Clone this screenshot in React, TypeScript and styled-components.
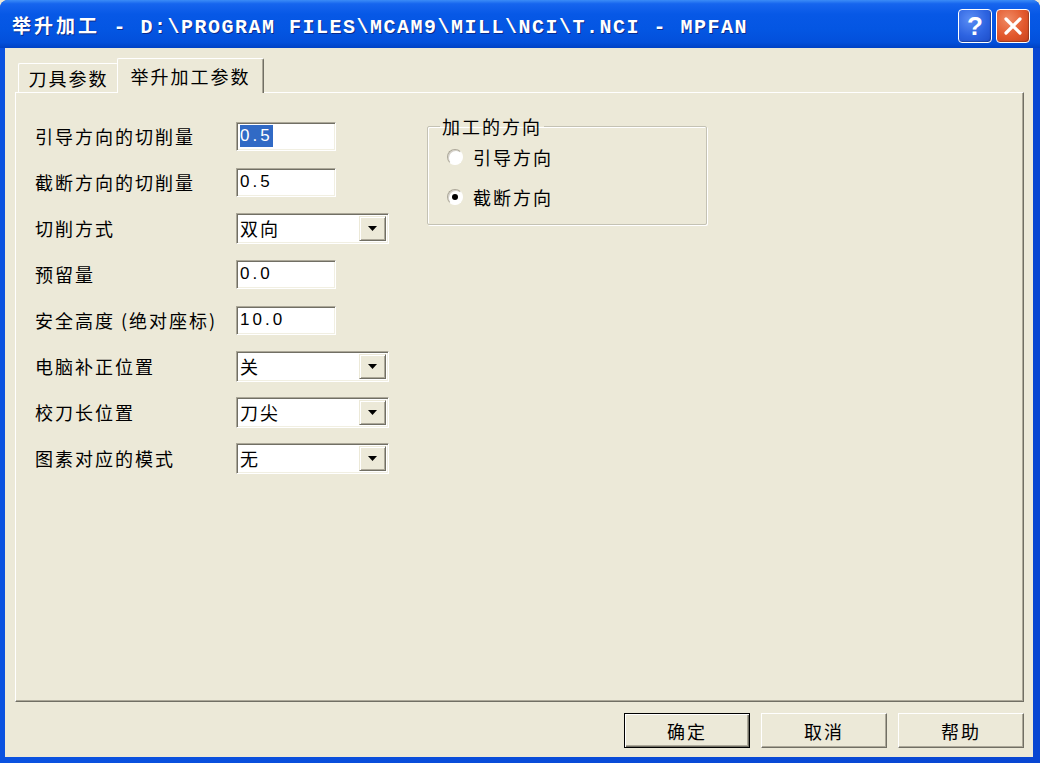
import React, { FC } from 'react';
import styled, { createGlobalStyle } from 'styled-components';

const GlobalStyle = createGlobalStyle`
  html, body {
    margin: 0;
    padding: 0;
    width: 1040px;
    height: 763px;
    overflow: hidden;
    background: #ece9d8;
  }
  body {
    font-family: "Noto Sans CJK SC", "Liberation Sans", sans-serif;
  }
`;

const Window = styled.div`
  width: 1040px;
  height: 763px;
  display: flex;
  flex-direction: column;
  background: #0a4bd8;
  border-radius: 8px 8px 0 0;
  overflow: hidden;
`;

const TitleBar = styled.div`
  height: 48px;
  flex: none;
  display: flex;
  align-items: center;
  padding: 0 10px 0 12px;
  box-sizing: border-box;
  background: linear-gradient(
    to bottom,
    #3b8cf7 0%,
    #1665ee 8%,
    #0758e6 30%,
    #0456e3 60%,
    #0350db 88%,
    #0042c4 100%
  );
`;

const TitleText = styled.div`
  flex: 1;
  color: #fff;
  font-weight: bold;
  white-space: nowrap;
  padding-top: 2px;
  text-shadow: 1px 1px 0 #0a2a8a;
`;

const TitleCjk = styled.span`
  font-family: "Noto Sans CJK SC", sans-serif;
  font-size: 19px;
  letter-spacing: 3px;
`;

const TitlePath = styled.span`
  font-family: "Liberation Mono", monospace;
  font-size: 20px;
  letter-spacing: 1.5px;
`;

const CaptionButtons = styled.div`
  display: flex;
  gap: 4px;
  margin-top: 4px;
`;

const CaptionButton = styled.div<{ $variant: 'help' | 'close' }>`
  width: 34px;
  height: 34px;
  box-sizing: border-box;
  border: 1px solid #fff;
  border-radius: 4px;
  display: flex;
  align-items: center;
  justify-content: center;
  color: #fff;
  font-family: "Liberation Sans", sans-serif;
  font-weight: bold;
  font-size: 26px;
  background: ${(p) =>
    p.$variant === 'help'
      ? 'radial-gradient(circle at 35% 30%, #5b8ef5 0%, #2d63e0 55%, #1c4cc8 100%)'
      : 'radial-gradient(circle at 35% 30%, #f08a64 0%, #e2582c 55%, #c6421c 100%)'};
  box-shadow: inset -1px -1px 1px rgba(0, 0, 0, 0.25);
`;

const FrameBody = styled.div`
  flex: 1;
  display: flex;
  padding: 0 7px 6px 5px;
  background: linear-gradient(to right, #0a52e0, #0846d2);
`;

const Client = styled.div`
  flex: 1;
  display: flex;
  flex-direction: column;
  background: #ece9d8;
  padding: 10px 9px 9px 10px;
`;

const TabStrip = styled.div`
  height: 34px;
  display: flex;
  align-items: flex-end;
  padding-left: 3px;
  position: relative;
  z-index: 1;
`;

const Tab = styled.div<{ $active?: boolean }>`
  box-sizing: border-box;
  display: flex;
  align-items: center;
  justify-content: center;
  font-size: 18px;
  letter-spacing: 2px;
  color: #000;
  background: #ece9d8;
  border-top: 1px solid #fff;
  border-left: 1px solid #fff;
  border-radius: 2px 2px 0 0;
  width: ${(p) => (p.$active ? '147px' : '100px')};
  height: ${(p) => (p.$active ? '35px' : '29px')};
  margin-bottom: ${(p) => (p.$active ? '-1px' : '0')};
  margin-left: ${(p) => (p.$active ? '-1px' : '0')};
  border-right: ${(p) => (p.$active ? '1px solid #716f64' : 'none')};
  box-shadow: ${(p) => (p.$active ? 'inset -1px 0 0 #aca899' : 'none')};
  padding-bottom: ${(p) => (p.$active ? '1px' : '0')};
`;

const Panel = styled.div`
  flex: 1;
  display: flex;
  align-items: flex-start;
  padding: 20px 0 0 19px;
  border-top: 1px solid #fff;
  border-left: 1px solid #fff;
  border-right: 1px solid #716f64;
  border-bottom: 1px solid #716f64;
  box-shadow: inset -1px -1px 0 #aca899;
`;

const FormGrid = styled.div`
  display: grid;
  grid-template-columns: 201px 154px;
  grid-auto-rows: 46px;
  align-items: center;
`;

const Label = styled.div`
  font-size: 18px;
  letter-spacing: 2px;
  color: #000;
  white-space: nowrap;
`;

const Sunken = styled.div`
  box-sizing: border-box;
  background: #fff;
  border-top: 1px solid #aca899;
  border-left: 1px solid #aca899;
  border-right: 1px solid #fff;
  border-bottom: 1px solid #fff;
  box-shadow: inset 1px 1px 0 #716f64, inset -1px -1px 0 #f1efe2;
  display: flex;
  align-items: center;
`;

const TextBox = styled(Sunken)`
  width: 100px;
  height: 29px;
  padding-left: 3px;
  font-family: "Liberation Sans", sans-serif;
  font-size: 17px;
  letter-spacing: 3px;
  color: #000;
`;

const Selected = styled.span`
  background: #316ac5;
  color: #fff;
  line-height: 22px;
`;

const Combo = styled(Sunken)`
  width: 153px;
  height: 31px;
  padding: 2px;
  align-items: stretch;
`;

const ComboText = styled.div`
  flex: 1;
  display: flex;
  align-items: center;
  padding-left: 1px;
  font-size: 18px;
  letter-spacing: 2px;
  color: #000;
`;

const ComboArrow = styled.div`
  width: 27px;
  box-sizing: border-box;
  display: flex;
  align-items: center;
  justify-content: center;
  background: #ece9d8;
  border-top: 1px solid #ece9d8;
  border-left: 1px solid #ece9d8;
  border-right: 1px solid #716f64;
  border-bottom: 1px solid #716f64;
  box-shadow: inset 1px 1px 0 #fff, inset -1px -1px 0 #aca899;
`;

const GroupBox = styled.fieldset`
  box-sizing: border-box;
  width: 280px;
  margin: 2px 0 0 37px;
  padding: 0 0 7px 0;
  border: 1px solid #c4c2b4;
  box-shadow: inset 1px 1px 0 #fff, 1px 1px 0 #fff;
  border-radius: 2px;
`;

const Legend = styled.legend`
  margin-left: 12px;
  padding: 0 2px;
  font-size: 18px;
  line-height: 22px;
  letter-spacing: 2px;
  color: #000;
`;

const RadioRow = styled.div`
  height: 40px;
  display: flex;
  align-items: center;
  gap: 10px;
  padding-left: 19px;
  font-size: 18px;
  letter-spacing: 2px;
  color: #000;
`;

const RadioDot = styled.span<{ $checked?: boolean }>`
  position: relative;
  width: 16px;
  height: 16px;
  box-sizing: border-box;
  border-radius: 50%;
  background: #fff;
  border: 1px solid;
  border-color: #aca899 #fff #fff #aca899;
  box-shadow: inset 1px 1px 0 #d4d0c8;

  &::after {
    content: '';
    display: ${(p) => (p.$checked ? 'block' : 'none')};
    position: absolute;
    left: 4px;
    top: 4px;
    width: 6px;
    height: 6px;
    border-radius: 50%;
    background: #000;
  }
`;

const ButtonRow = styled.div`
  display: flex;
  justify-content: flex-end;
  gap: 11px;
  margin-top: 11px;
`;

const PushButton = styled.div<{ $default?: boolean }>`
  width: 126px;
  height: 35px;
  box-sizing: border-box;
  display: flex;
  align-items: center;
  justify-content: center;
  font-size: 18px;
  letter-spacing: 2px;
  color: #000;
  background: #ece9d8;
  border: 1px solid;
  border-color: ${(p) => (p.$default ? '#000' : '#fff #716f64 #716f64 #fff')};
  box-shadow: ${(p) =>
    p.$default
      ? 'inset 1px 1px 0 #fff, inset -1px -1px 0 #716f64, inset -2px -2px 0 #aca899'
      : 'inset -1px -1px 0 #aca899'};
`;

const ArrowIcon: FC = () => (
  <svg width="9" height="5" viewBox="0 0 9 5">
    <polygon points="0,0 9,0 4.5,5" fill="#000" />
  </svg>
);

type Row =
  | { label: string; kind: 'text'; value: string; selected?: boolean }
  | { label: string; kind: 'combo'; value: string };

const rows: Row[] = [
  { label: '引导方向的切削量', kind: 'text', value: '0.5', selected: true },
  { label: '截断方向的切削量', kind: 'text', value: '0.5' },
  { label: '切削方式', kind: 'combo', value: '双向' },
  { label: '预留量', kind: 'text', value: '0.0' },
  { label: '安全高度 (绝对座标)', kind: 'text', value: '10.0' },
  { label: '电脑补正位置', kind: 'combo', value: '关' },
  { label: '校刀长位置', kind: 'combo', value: '刀尖' },
  { label: '图素对应的模式', kind: 'combo', value: '无' },
];

const App: FC = () => {
  return (
    <>
      <GlobalStyle />
      <Window>
        <TitleBar>
          <TitleText>
            <TitleCjk>举升加工</TitleCjk>
            <TitlePath>{' - D:\\PROGRAM FILES\\MCAM9\\MILL\\NCI\\T.NCI - MPFAN'}</TitlePath>
          </TitleText>
          <CaptionButtons>
            <CaptionButton $variant="help">?</CaptionButton>
            <CaptionButton $variant="close">
              <svg width="20" height="20" viewBox="0 0 20 20">
                <path d="M3 3 L17 17 M17 3 L3 17" stroke="#fff" strokeWidth="3.2" strokeLinecap="round" />
              </svg>
            </CaptionButton>
          </CaptionButtons>
        </TitleBar>
        <FrameBody>
          <Client>
            <TabStrip>
              <Tab>刀具参数</Tab>
              <Tab $active>举升加工参数</Tab>
            </TabStrip>
            <Panel>
              <FormGrid>
                {rows.map((row, idx) => (
                  <React.Fragment key={`${idx}-${row.label}`}>
                    <Label>{row.label}</Label>
                    {row.kind === 'text' ? (
                      <TextBox>
                        {row.selected ? <Selected>{row.value}</Selected> : row.value}
                      </TextBox>
                    ) : (
                      <Combo>
                        <ComboText>{row.value}</ComboText>
                        <ComboArrow>
                          <ArrowIcon />
                        </ComboArrow>
                      </Combo>
                    )}
                  </React.Fragment>
                ))}
              </FormGrid>
              <GroupBox>
                <Legend>加工的方向</Legend>
                <RadioRow>
                  <RadioDot />
                  引导方向
                </RadioRow>
                <RadioRow>
                  <RadioDot $checked />
                  截断方向
                </RadioRow>
              </GroupBox>
            </Panel>
            <ButtonRow>
              <PushButton $default>确定</PushButton>
              <PushButton>取消</PushButton>
              <PushButton>帮助</PushButton>
            </ButtonRow>
          </Client>
        </FrameBody>
      </Window>
    </>
  );
};

export default App;
